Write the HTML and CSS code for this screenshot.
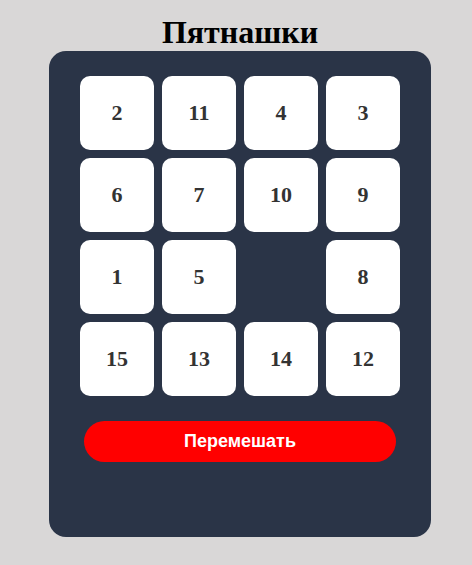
FILE: index.html
```html
<!DOCTYPE html>
<html lang="ru">
<head>
<meta charset="utf-8">
<title>Пятнашки</title>
<link rel="stylesheet" href="styles.css">
</head>
<body>
<h1 class="title">Пятнашки</h1>
<div class="panel">
  <div class="board">
    <div class="tile">2</div>
    <div class="tile">11</div>
    <div class="tile">4</div>
    <div class="tile">3</div>
    <div class="tile">6</div>
    <div class="tile">7</div>
    <div class="tile">10</div>
    <div class="tile">9</div>
    <div class="tile">1</div>
    <div class="tile">5</div>
    <div class="tile empty"></div>
    <div class="tile">8</div>
    <div class="tile">15</div>
    <div class="tile">13</div>
    <div class="tile">14</div>
    <div class="tile">12</div>
  </div>
  <button class="shuffle">Перемешать</button>
</div>
</body>
</html>
```
FILE: styles.css
```css
html, body {
  background: #d9d7d7;
}
body {
  margin: 0 0 0 8px;
  display: flex;
  flex-direction: column;
  align-items: center;
  font-family: "Liberation Serif", "Times New Roman", serif;
}
.title {
  margin: 14px 0 1px;
  font-size: 32px;
  line-height: 36px;
  font-weight: bold;
  color: #000;
}
.panel {
  width: 382px;
  box-sizing: border-box;
  padding: 25px 31px 75px;
  background: #2a3447;
  border-radius: 17px;
  display: flex;
  flex-direction: column;
  align-items: center;
}
.board {
  display: grid;
  grid-template-columns: repeat(4, 74px);
  grid-auto-rows: 74px;
  gap: 8px;
}
.tile {
  background: #fff;
  border-radius: 10px;
  display: flex;
  align-items: center;
  justify-content: center;
  font-family: "Liberation Serif", "Times New Roman", serif;
  font-weight: bold;
  font-size: 22px;
  color: #333;
}
.tile.empty {
  background: transparent;
}
.shuffle {
  margin-top: 25px;
  width: 312px;
  height: 41px;
  border: none;
  border-radius: 21px;
  background: #ff0000;
  color: #fff;
  font-family: "Liberation Sans", Arial, sans-serif;
  font-weight: bold;
  font-size: 18px;
  padding: 0;
}
```
